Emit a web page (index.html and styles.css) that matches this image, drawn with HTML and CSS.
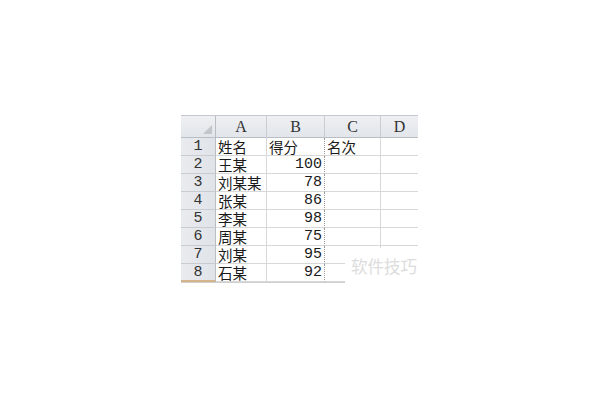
FILE: index.html
```html
<!DOCTYPE html>
<html>
<head>
<meta charset="utf-8">
<link rel="stylesheet" href="styles.css">
</head>
<body>
<div class="page">
  <div class="sheet">
    <div class="grid">
      <div class="hd corner"><span class="tri"></span></div>
      <div class="hd col">A</div>
      <div class="hd col">B</div>
      <div class="hd col">C</div>
      <div class="hd col last">D</div>

      <div class="rh">1</div><div class="c">姓名</div><div class="c b">得分</div><div class="c">名次</div><div class="c last"></div>
      <div class="rh">2</div><div class="c">王某</div><div class="c b n">100</div><div class="c"></div><div class="c last"></div>
      <div class="rh">3</div><div class="c">刘某某</div><div class="c b n">78</div><div class="c"></div><div class="c last"></div>
      <div class="rh">4</div><div class="c">张某</div><div class="c b n">86</div><div class="c"></div><div class="c last"></div>
      <div class="rh">5</div><div class="c">李某</div><div class="c b n">98</div><div class="c"></div><div class="c last"></div>
      <div class="rh">6</div><div class="c">周某</div><div class="c b n">75</div><div class="c"></div><div class="c last"></div>
      <div class="rh">7</div><div class="c">刘某</div><div class="c b n">95</div><div class="c"></div><div class="c last"></div>
      <div class="rh bot">8</div><div class="c">石某</div><div class="c b n">92</div><div class="c"></div><div class="c last"></div>
    </div>
    <div class="mark">软件技巧</div>
  </div>
</div>
</body>
</html>
```
FILE: styles.css
```css
html, body {
  margin: 0;
  padding: 0;
  background: #fff;
}
.page {
  padding: 115px 0 0 181px;
}
.sheet {
  position: relative;
  width: 237px;
}
.grid {
  display: grid;
  grid-template-columns: 35px 51px 58px 56px 37px;
  grid-template-rows: 22px repeat(8, 18px);
  border-top: 1px solid #c4c8cf;
  border-bottom: 1px solid #cfcfcf;
  font-family: "Noto Sans CJK SC", sans-serif;
  color: #1a1a1a;
}
.hd {
  background: linear-gradient(#eef0f3, #e2e5ea);
  border-right: 1px solid #c9ccd2;
  border-bottom: 1px solid #b9bec6;
  box-sizing: border-box;
  font-family: "Liberation Serif", serif;
  font-size: 16px;
  color: #333;
  display: flex;
  align-items: center;
  justify-content: center;
}
.corner {
  position: relative;
  border-right: 1px solid #b9bec6;
}
.tri {
  position: absolute;
  right: 3px;
  bottom: 3px;
  width: 0;
  height: 0;
  border-left: 9px solid transparent;
  border-bottom: 9px solid #c2c5ca;
}
.hd.last {
  border-right: none;
}
.rh {
  background: linear-gradient(90deg, #e9ebef, #e0e3e8);
  border-right: 1px solid #b9bec6;
  border-bottom: 1px solid #c9ccd2;
  box-sizing: border-box;
  font-family: "Liberation Mono", monospace;
  font-size: 15px;
  color: #333;
  display: flex;
  align-items: center;
  justify-content: center;
}
.rh.bot {
  border-bottom: 2px solid #d4b48a;
}
.c {
  border-right: 1px solid #d8d8d8;
  border-bottom: 1px solid #d8d8d8;
  box-sizing: border-box;
  font-size: 14.5px;
  line-height: 17px;
  padding-left: 2px;
  white-space: nowrap;
}
.c.b {
  border-right: 1px dotted #9a9a9a;
}
.c.n {
  text-align: right;
  padding-right: 2px;
  font-family: "Liberation Mono", monospace;
  font-size: 15px;
}
.c.last {
  border-right: none;
}
.mark {
  position: absolute;
  left: 164px;
  top: 133px;
  width: 76px;
  height: 36px;
  background: #fff;
  color: #dcdcdc;
  font-family: "Noto Sans CJK SC", sans-serif;
  font-size: 16.5px;
  line-height: 20px;
  padding: 8px 0 0 6px;
  box-sizing: border-box;
  white-space: nowrap;
}
```
